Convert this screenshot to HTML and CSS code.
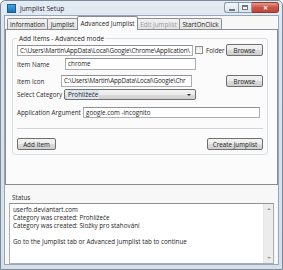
FILE: index.html
```html
<!DOCTYPE html>
<html lang="en">
<head>
  <meta charset="UTF-8">
  <title>Jumplist Setup</title>
  <link rel="stylesheet" href="styles.css">
</head>
<body>

  <div class="window">
    <div class="titlebar">
      <span class="app-icon"></span>
      <span class="title">Jumplist Setup</span>
      <div class="controls">
        <span class="ctl min"><span class="glyph-min"></span></span>
        <span class="ctl max"><span class="glyph-max"></span></span>
        <span class="ctl close">&#x2715;</span>
      </div>
    </div>

    <div class="client">
      <div class="tabs">
        <span class="tab t-info">Information</span>
        <span class="tab t-jump">Jumplist</span>
        <span class="tab t-adv active">Advanced Jumplist</span>
        <span class="tab t-edit disabled">Edit Jumplist</span>
        <span class="tab t-start">StartOnClick</span>
      </div>

      <div class="tab-panel">
        <fieldset class="group">
          <legend>Add Items - Advanced mode</legend>

          <div class="row row-path">
            <div class="textbox tb-path path">C:\Users\Martin\AppData\Local\Google\Chrome\Application\</div>
            <span class="checkbox"></span>
            <span class="cb-label">Folder</span>
            <button class="btn btn-browse">Browse</button>
          </div>

          <div class="row row-name">
            <label class="lbl">Item Name</label>
            <div class="textbox tb-name">chrome</div>
          </div>

          <div class="row row-icon">
            <label class="lbl">Item Icon</label>
            <div class="textbox tb-icon path">C:\Users\Martin\AppData\Local\Google\Chr</div>
            <button class="btn btn-browse">Browse</button>
          </div>

          <div class="row row-cat">
            <label class="lbl">Select Category</label>
            <div class="combo"><span class="combo-text">Prohlížeče</span><span class="arrow"></span></div>
          </div>

          <div class="row row-arg">
            <label class="lbl">Application Argument</label>
            <div class="textbox tb-arg">google.com -incognito</div>
          </div>

          <div class="separator"></div>

          <div class="row row-actions">
            <button class="btn btn-add">Add Item</button>
            <button class="btn btn-create">Create Jumplist</button>
          </div>
        </fieldset>
      </div>

      <div class="status">
        <div class="status-label">Status</div>
        <div class="status-box">
          <div class="status-text">
            <div>userfo.deviantart.com</div>
            <div>Category was created: Prohlížeče</div>
            <div>Category was created: Složky pro stahování</div>
            <div>&nbsp;</div>
            <div>Go to the Jumplist tab or Advanced Jumplist tab to continue</div>
          </div>
          <div class="scrollbar">
            <span class="sb-arrow up"></span>
            <span class="sb-arrow down"></span>
          </div>
        </div>
      </div>
    </div>
  </div>

</body>
</html>
```

FILE: styles.css
```css
body { margin: 0; font-family: "Open Sans", "Noto Sans", sans-serif; font-size: 6.3px; color: #1e1e1e; background: #fff; }

.window { width: 283px; height: 270px; box-sizing: border-box; border: 1px solid #7d8a99; border-radius: 5px 5px 0 0; background: linear-gradient(#e4ebf3, #d9e3ee 40px, #d6e0eb); padding: 0 3px 4px 3px; display: flex; flex-direction: column; }

/* title bar */
.titlebar { height: 17px; display: flex; align-items: center; }
.app-icon { width: 7px; height: 7px; margin-left: 3px; background: linear-gradient(#4b9fd8, #1f74b8); border: 1px solid #1a5e96; }
.title { margin-left: 4px; font-size: 6.6px; color: #1c2430; }
.controls { margin-left: auto; display: flex; align-self: flex-start; margin-top: 1px; }
.ctl { height: 11px; display: flex; align-items: center; justify-content: center; box-sizing: border-box; border: 1px solid #8d99a8; background: linear-gradient(#f3f6fa, #dbe3ec); }
.min { width: 14px; border-radius: 3px 0 0 3px; border-right: none; }
.max { width: 14px; }
.close { width: 27px; border-radius: 0 3px 3px 0; border-left: none; border-color: #8b3a2e; background: linear-gradient(#e79a8c, #c75546 50%, #c14636); color: #fff; font-size: 6px; font-weight: bold; }
.glyph-min { width: 6px; height: 2px; border: 1px solid #6a7585; background: #fff; box-sizing: border-box; margin-top: 4px; }
.glyph-max { width: 6px; height: 5px; border: 1px solid #6a7585; border-top-width: 2px; background: #fff; box-sizing: border-box; }

/* client area */
.client { flex: 1; background: #f7f7f7; border: 1px solid #9aa6b4; display: flex; flex-direction: column; }

.tabs { display: flex; align-items: flex-end; height: 13px; padding-left: 2px; }
.tab { height: 11px; box-sizing: border-box; border: 1px solid #8c8e94; border-bottom: none; margin-right: -1px; background: linear-gradient(#f2f2f2, #e3e3e3); display: flex; align-items: center; justify-content: center; border-radius: 2px 2px 0 0; }
.tab.active { height: 14px; background: #fcfcfc; position: relative; z-index: 1; margin-bottom: -1px; border-color: #898c95; }
.tab.disabled { color: #9c9c9c; }
.t-info { width: 41px; }
.t-jump { width: 31px; }
.t-adv { width: 61px; }
.t-edit { width: 43px; }
.t-start { width: 43px; }

.tab-panel { height: 156px; box-sizing: border-box; border: 1px solid #898c95; background: #fbfbfb; padding: 4px 9px 0 6px; }

.group { margin: 0; border: 1px solid #d5dfe5; border-radius: 3px; padding: 0 4px; height: 121px; box-sizing: border-box; }
.group legend { padding: 0 2px; font-size: 6.5px; }

.row { display: flex; align-items: center; }
.row > * { flex-shrink: 0; }
.row-path { margin-top: 1px; height: 12px; }
.row-name { margin-top: 2px; height: 12px; }
.row-icon { margin-top: 5px; height: 12px; }
.row-cat { margin-top: 2px; height: 11px; }
.row-arg { margin-top: 7px; height: 11px; }

.lbl { color: #2a2a2a; }
.textbox { height: 11px; box-sizing: border-box; border: 1px solid #abadb3; border-top-color: #8e9298; background: #fff; padding: 0 2px; line-height: 9px; white-space: nowrap; overflow: hidden; }
.path { letter-spacing: -0.15px; }
.tb-path { width: 176px; }
.tb-name { width: 131px; margin-left: auto; margin-right: 67px; height: 12px; line-height: 10px; }
.tb-icon { width: 131px; margin-left: auto; height: 12px; line-height: 10px; }
.tb-arg { width: 177px; margin-left: auto; margin-right: 3px; }

.checkbox { width: 6px; height: 6px; border: 1px solid #8f8f8f; background: linear-gradient(#e6e6e6, #fafafa); margin-left: 2px; }
.cb-label { margin-left: 3px; }

.btn { font-family: inherit; font-size: 6.3px; color: #1e1e1e; padding: 0; height: 12px; box-sizing: border-box; border: 1px solid #707070; border-radius: 2px; background: linear-gradient(#f3f3f3, #ebebeb 50%, #dcdcdc 51%, #cfcfcf); }
.btn-browse { width: 37px; margin-left: auto; }
.row-icon .btn-browse { margin-left: 34px; }

.combo { width: 132px; height: 11px; margin-left: auto; margin-right: 67px; box-sizing: border-box; border: 1px solid #707070; border-radius: 2px; background: linear-gradient(#f3f3f3, #ebebeb 50%, #dcdcdc 51%, #cfcfcf); display: flex; align-items: center; padding-left: 2px; }
.combo-text { background: #dfe6ef; padding: 0 1px; }
.arrow { margin-left: auto; margin-right: 4px; width: 0; height: 0; border-left: 2px solid transparent; border-right: 2px solid transparent; border-top: 2px solid #333; }

.separator { height: 0; border-top: 1px solid #d0d4d9; border-bottom: 1px solid #fff; margin-top: 10px; }
.row-actions { margin-top: 8px; justify-content: space-between; }
.btn-add { width: 39px; }
.btn-create { width: 56px; }

/* status */
.status { padding: 10px 4px 0 4px; flex: 1; display: flex; flex-direction: column; }
.status-label { color: #2a2a2a; margin-left: 3px; line-height: 6px; }
.status-box { margin-top: 2px; height: 59px; border: 1px solid #abadb3; border-top-color: #8e9298; background: #fff; display: flex; }
.status-text { flex: 1; padding: 2px 3px; line-height: 8px; white-space: nowrap; overflow: hidden; }
.scrollbar { width: 9px; background: #ececec; border-left: 1px solid #e4e4e4; display: flex; flex-direction: column; justify-content: space-between; align-items: center; padding: 4px 0; }
.sb-arrow { width: 0; height: 0; border-left: 2px solid transparent; border-right: 2px solid transparent; }
.sb-arrow.up { border-bottom: 2px solid #9a9a9a; }
.sb-arrow.down { border-top: 2px solid #9a9a9a; }
```
